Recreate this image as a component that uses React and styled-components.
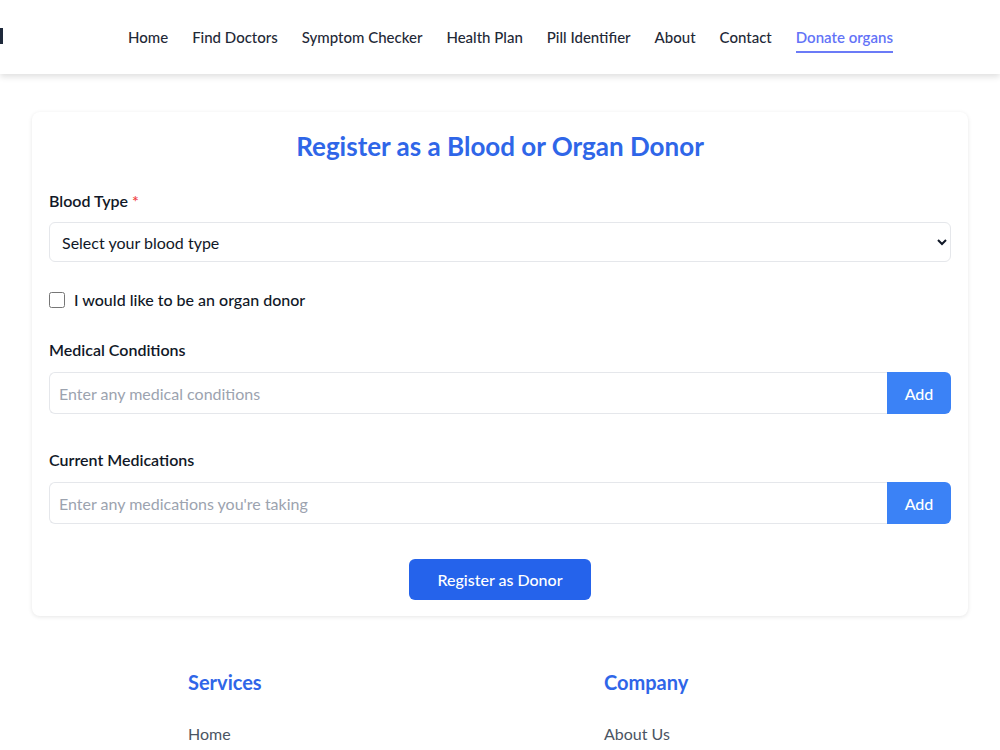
import React from "react";
import styled, { createGlobalStyle } from "styled-components";

const GlobalStyle = createGlobalStyle`
  body {
    margin: 0;
    background: #ffffff;
    font-family: "Lato", "Noto Sans", sans-serif;
    color: #111827;
  }
  * {
    box-sizing: border-box;
  }
`;

const navLinks = [
  "Home",
  "Find Doctors",
  "Symptom Checker",
  "Health Plan",
  "Pill Identifier",
  "About",
  "Contact",
  "Donate organs",
];

const App = () => {
  return (
    <>
      <GlobalStyle />
      <Navbar>
        <LogoMark />
        <NavList>
          {navLinks.map((link) => (
            <NavLink key={link} $active={link === "Donate organs"}>
              {link}
            </NavLink>
          ))}
        </NavList>
      </Navbar>

      <Main>
        <Card>
          <Title>Register as a Blood or Organ Donor</Title>

          <Field $spacing={0}>
            <Label $gap={12}>
              Blood Type <Required>*</Required>
            </Label>
            <Select defaultValue="">
              <option value="">Select your blood type</option>
              <option>A+</option>
              <option>A-</option>
              <option>B+</option>
              <option>B-</option>
              <option>AB+</option>
              <option>AB-</option>
              <option>O+</option>
              <option>O-</option>
            </Select>
          </Field>

          <CheckRow>
            <Checkbox type="checkbox" />
            <CheckLabel>I would like to be an organ donor</CheckLabel>
          </CheckRow>

          <Field $spacing={36}>
            <Label $gap={13}>Medical Conditions</Label>
            <InputGroup>
              <TextInput placeholder="Enter any medical conditions" />
              <AddButton>Add</AddButton>
            </InputGroup>
          </Field>

          <Field $spacing={0}>
            <Label $gap={13}>Current Medications</Label>
            <InputGroup>
              <TextInput placeholder="Enter any medications you're taking" />
              <AddButton>Add</AddButton>
            </InputGroup>
          </Field>

          <SubmitRow>
            <SubmitButton>Register as Donor</SubmitButton>
          </SubmitRow>
        </Card>
      </Main>

      <Footer>
        <FooterColumn>
          <FooterHeading>Services</FooterHeading>
          <FooterLink>Home</FooterLink>
        </FooterColumn>
        <FooterColumn>
          <FooterHeading>Company</FooterHeading>
          <FooterLink>About Us</FooterLink>
        </FooterColumn>
      </Footer>
    </>
  );
};

const Navbar = styled.header`
  height: 74px;
  display: flex;
  align-items: center;
  background: #ffffff;
  box-shadow: 0 3px 6px rgba(0, 0, 0, 0.12);
  position: relative;
`;

const LogoMark = styled.span`
  width: 3px;
  height: 16px;
  background: #1e293b;
  margin-top: -2px;
`;

const NavList = styled.nav`
  display: flex;
  gap: 24px;
  margin-left: 125px;
  margin-top: 6px;
`;

const NavLink = styled.a`
  font-size: 15px;
  font-weight: ${(p) => (p.$active ? 600 : 500)};
  color: ${(p) => (p.$active ? "#6373f7" : "#1f2937")};
  padding-bottom: 5px;
  border-bottom: 2px solid ${(p) => (p.$active ? "#6b7bf7" : "transparent")};
  cursor: pointer;
`;

const Main = styled.main`
  padding: 38px 32px 0;
`;

const Card = styled.section`
  background: #ffffff;
  border-radius: 8px;
  box-shadow: 0 1px 4px rgba(0, 0, 0, 0.1);
  padding: 18px 17px 16px;
`;

const Title = styled.h2`
  margin: 0 0 29px;
  text-align: center;
  font-size: 26px;
  font-weight: 700;
  color: #2f66e8;
`;

const Field = styled.div`
  margin-bottom: ${(p) => p.$spacing}px;
`;

const Label = styled.label`
  display: block;
  font-size: 16px;
  font-weight: 600;
  color: #111827;
  margin-bottom: ${(p) => p.$gap}px;
`;

const Required = styled.span`
  color: #ef4444;
`;

const Select = styled.select`
  width: 100%;
  height: 40px;
  padding: 0 8px;
  font-family: inherit;
  font-size: 16px;
  color: #111827;
  background: #ffffff;
  border: 1px solid #e5e7eb;
  border-radius: 6px;
`;

const CheckRow = styled.div`
  display: flex;
  align-items: center;
  gap: 9px;
  margin: 28px 0 31px;
`;

const Checkbox = styled.input`
  width: 16px;
  height: 16px;
  margin: 0;
`;

const CheckLabel = styled.span`
  font-size: 16px;
  font-weight: 500;
  color: #111827;
`;

const InputGroup = styled.div`
  display: flex;
  height: 42px;
`;

const TextInput = styled.input`
  flex: 1;
  padding: 0 9px;
  font-family: inherit;
  font-size: 16px;
  color: #111827;
  border: 1px solid #e5e7eb;
  border-right: none;
  border-radius: 6px 0 0 6px;
  outline: none;

  &::placeholder {
    color: #9ca3af;
  }
`;

const AddButton = styled.button`
  width: 64px;
  border: none;
  border-radius: 0 6px 6px 0;
  background: #3b82f6;
  color: #ffffff;
  font-family: inherit;
  font-size: 16px;
  font-weight: 500;
`;

const SubmitRow = styled.div`
  display: flex;
  justify-content: center;
  margin-top: 35px;
`;

const SubmitButton = styled.button`
  width: 182px;
  height: 41px;
  border: none;
  border-radius: 6px;
  background: #2563eb;
  color: #ffffff;
  font-family: inherit;
  font-size: 16px;
  font-weight: 500;
`;

const Footer = styled.footer`
  display: grid;
  grid-template-columns: 416px 416px;
  padding: 54px 0 0 188px;
`;

const FooterColumn = styled.div`
  display: flex;
  flex-direction: column;
`;

const FooterHeading = styled.h3`
  margin: 0 0 30px;
  font-size: 20px;
  font-weight: 700;
  color: #2f66e8;
`;

const FooterLink = styled.a`
  font-size: 16px;
  color: #4b5563;
`;

export default App;
